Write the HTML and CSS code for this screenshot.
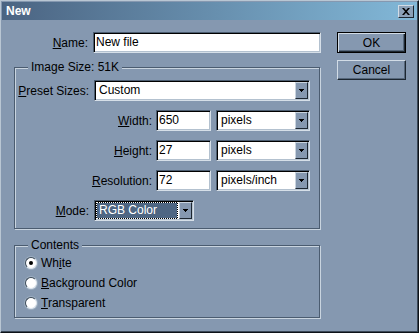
FILE: index.html
```html
<!DOCTYPE html>
<html lang="en">
<head>
  <meta charset="UTF-8">
  <meta name="viewport" content="width=device-width, initial-scale=1.0">
  <title>New</title>
  <link rel="stylesheet" href="styles.css">
</head>
<body>
  <div class="window">
    <div class="titlebar">
      <span class="title">New</span>
      <span class="close">
        <svg width="8" height="7" viewBox="0 0 8 7"><path d="M0 0h2l2 2.2L6 0h2L5 3.5 8 7H6L4 4.8 2 7H0l3-3.5z" fill="#000"/></svg>
      </span>
    </div>

    <div class="content">
      <div class="main">
        <div class="row">
          <span class="label"><u>N</u>ame:</span>
          <div class="field name">New file</div>
        </div>

        <fieldset class="group size">
          <legend>Image Size: 51K</legend>
          <div class="row">
            <span class="label"><u>P</u>reset Sizes:</span>
            <div class="select preset"><span class="value">Custom</span><span class="arrow"><svg width="5" height="3"><path d="M0 0h5v1h-1v1h-1v1h-1v-1h-1v-1h-1z"/></svg></span></div>
          </div>
          <div class="row dim">
            <span class="dim-label"><u>W</u>idth:</span>
            <div class="field num">650</div>
            <div class="select unit"><span class="value">pixels</span><span class="arrow"><svg width="5" height="3"><path d="M0 0h5v1h-1v1h-1v1h-1v-1h-1v-1h-1z"/></svg></span></div>
          </div>
          <div class="row dim">
            <span class="dim-label"><u>H</u>eight:</span>
            <div class="field num">27</div>
            <div class="select unit"><span class="value">pixels</span><span class="arrow"><svg width="5" height="3"><path d="M0 0h5v1h-1v1h-1v1h-1v-1h-1v-1h-1z"/></svg></span></div>
          </div>
          <div class="row dim">
            <span class="dim-label"><u>R</u>esolution:</span>
            <div class="field num">72</div>
            <div class="select unit"><span class="value">pixels/inch</span><span class="arrow"><svg width="5" height="3"><path d="M0 0h5v1h-1v1h-1v1h-1v-1h-1v-1h-1z"/></svg></span></div>
          </div>
          <div class="row">
            <span class="label"><u>M</u>ode:</span>
            <div class="select mode"><span class="value">RGB Color</span><span class="arrow"><svg width="5" height="3"><path d="M0 0h5v1h-1v1h-1v1h-1v-1h-1v-1h-1z"/></svg></span></div>
          </div>
        </fieldset>

        <fieldset class="group contents">
          <legend>Contents</legend>
          <div class="radio checked"><span class="mark"></span><span>Wh<u>i</u>te</span></div>
          <div class="radio"><span class="mark"></span><span><u>B</u>ackground Color</span></div>
          <div class="radio"><span class="mark"></span><span><u>T</u>ransparent</span></div>
        </fieldset>
      </div>

      <div class="actions">
        <button class="btn default">OK</button>
        <button class="btn cancel">Cancel</button>
      </div>
    </div>
  </div>
</body>
</html>
```

FILE: styles.css
```css
body {
  margin: 0;
  font-family: 'Liberation Sans', Arial, sans-serif;
  font-size: 12px;
  color: #000;
  background-color: #8598b0;
}
.window {
  width: 419px;
  height: 333px;
  box-sizing: border-box;
  background-color: #8598b0;
  border: 1px solid;
  border-color: #b9c6d3 #0d1218 #0d1218 #b9c6d3;
  box-shadow: inset -1px -1px 0 #3b4857;
}
.titlebar {
  height: 18px;
  margin: 1px 1px 0;
  padding: 0 3px 0 4px;
  display: flex;
  align-items: center;
  justify-content: space-between;
  background: linear-gradient(90deg, #4b6482, #82b8d8);
}
.title {
  color: #fff;
  font-weight: bold;
}
.close {
  width: 16px;
  height: 13px;
  box-sizing: border-box;
  display: flex;
  align-items: center;
  justify-content: center;
  background-color: #8ba0b7;
  border: 1px solid;
  border-color: #d2dce6 #1d2731 #1d2731 #d2dce6;
}
.content {
  display: flex;
  padding: 12px 0 0 13px;
}
.main {
  width: 307px;
}
.row {
  display: flex;
  align-items: center;
  height: 21px;
}
.label {
  width: 79px;
  flex: none;
  box-sizing: border-box;
  padding-right: 5px;
  text-align: right;
}
.field,
.select {
  box-sizing: border-box;
  height: 21px;
  background-color: #fff;
  border: 1px solid;
  border-color: #4c5d70 #d6dfe8 #d6dfe8 #4c5d70;
  box-shadow: inset 1px 1px 0 #000, inset -1px -1px 0 #b3c1cf;
  line-height: 19px;
  white-space: nowrap;
}
.field {
  padding: 0 2px;
}
.name {
  flex: 1;
}
.num {
  width: 55px;
  margin-left: 4px;
}
.select {
  display: flex;
  padding: 1px;
}
.select .value {
  flex: 1;
  padding-left: 3px;
  line-height: 17px;
}
.arrow {
  width: 13px;
  box-sizing: border-box;
  display: flex;
  align-items: center;
  justify-content: center;
  background-color: #8598b0;
  border: 1px solid;
  border-color: #c9d4df #1d2731 #1d2731 #c9d4df;
}
.preset {
  flex: 1;
}
.unit {
  width: 94px;
  margin-left: 5px;
}
.mode {
  width: 100px;
}
.mode .value {
  margin: 0 1px 0 0;
  padding-left: 2px;
  line-height: 15px;
  color: #fff;
  border: 1px dotted #fff;
  background: linear-gradient(#4e6683, #4e6683) padding-box, #000;
}
.dim {
  justify-content: flex-end;
}
.group {
  margin: 7px 1px 0 0;
  padding: 6px 9px 7px 0;
  min-width: 0;
  border: 1px solid #4b5c70;
  box-shadow: inset 1px 1px 0 #c9d4df, 1px 1px 0 #c9d4df;
}
.group legend {
  margin-left: 13px;
  padding: 0 3px;
  line-height: 14px;
  background-color: #8598b0;
}
.size .row + .row {
  margin-top: 9px;
}
.contents {
  margin-top: 9px;
  padding: 1px 9px 4px 0;
}
.radio {
  display: flex;
  align-items: center;
  gap: 4px;
  height: 20px;
  padding-left: 10px;
}
.mark {
  width: 12px;
  height: 12px;
  box-sizing: border-box;
  display: flex;
  align-items: center;
  justify-content: center;
  border-radius: 50%;
  background-color: #fff;
  border: 1px solid;
  border-color: #3a4857 #dde5ed #dde5ed #3a4857;
  box-shadow: 0 0 0 1px #9eafc1;
}
.checked .mark::after {
  content: '';
  width: 4px;
  height: 4px;
  border-radius: 50%;
  background-color: #000;
}
.actions {
  width: 69px;
  margin-left: 16px;
  display: flex;
  flex-direction: column;
  gap: 7px;
}
.btn {
  height: 20px;
  padding: 0;
  font: inherit;
  color: #000;
  background-color: #8598b0;
  border: 1px solid;
  border-color: #d2dce6 #1d2731 #1d2731 #d2dce6;
  box-shadow: inset -1px -1px 0 #56677b;
}
.btn.default {
  height: 21px;
  border-color: #000;
  box-shadow: inset 1px 1px 0 #d2dce6, inset -1px -1px 0 #1d2731, inset -2px -2px 0 #56677b;
}
```
